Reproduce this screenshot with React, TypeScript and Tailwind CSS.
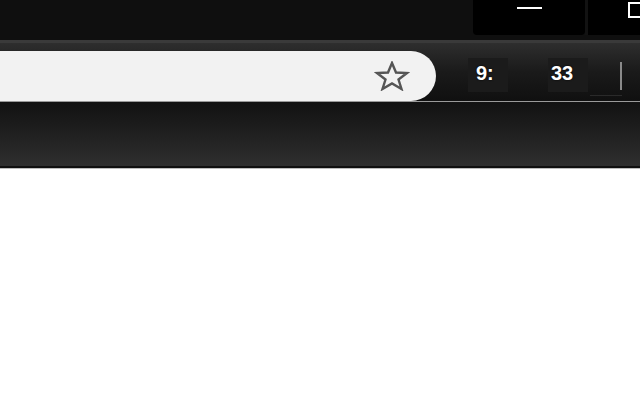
import React from "react";

export default function App() {
  return (
    <div className="w-[640px] h-[400px] bg-white overflow-hidden font-['Liberation_Sans',Arial,sans-serif]">
      {/* title bar */}
      <div className="h-[40px] bg-[#0f0f0f] flex">
        <div className="w-[473px]" />
        <div className="w-[112px] h-[35px] bg-black rounded-b-[4px] flex justify-center">
          <div className="mt-[7px] w-[25px] h-[2px] bg-white" />
        </div>
        <div className="w-[3px] h-[35px] bg-[#121212]" />
        <div className="flex-1 h-[35px] bg-black flex justify-end overflow-hidden">
          <div className="mt-[2px] w-[17px] h-[16px] border-2 border-white -mr-[5px] shrink-0" />
        </div>
      </div>
      {/* toolbar */}
      <div className="h-[61px] border-t-[3px] border-[#3a3a3a] bg-gradient-to-b from-[#2e2e2e] via-[#1a1a1a] to-[#101010] flex items-start">
        <div className="mt-[8px] w-[436px] h-[50px] bg-[#f2f2f2] rounded-r-full flex items-center justify-end pr-[26px]">
          <svg width="36" height="30" viewBox="0 0 36 30">
            <polygon
              points="18,2 22,11.5 33,12 24.5,18.5 27.5,28 18,22.5 8.5,28 11.5,18.5 3,12 14,11.5"
              fill="none"
              stroke="#555"
              strokeWidth="2.4"
              strokeLinejoin="miter"
            />
          </svg>
        </div>
        <div className="ml-[32px] mt-[15px] w-[40px] h-[34px] bg-[#1b1b1b] flex items-center pl-[8px] pb-[4px]">
          <span className="text-white font-bold text-[20px] leading-none [text-shadow:0_0_2px_#000]">9:</span>
        </div>
        <div className="ml-[40px] mt-[15px] w-[40px] h-[34px] bg-[#1b1b1b] flex items-center pl-[3px] pb-[4px]">
          <span className="text-white font-bold text-[20px] leading-none [text-shadow:0_0_2px_#000]">33</span>
        </div>
        <div className="ml-[2px] mt-[15px] w-[32px] h-[38px] border-b border-[#2a2a2a] flex justify-end">
          <div className="mt-[4px] w-[2px] h-[28px] bg-[#8a8a8a]" />
        </div>
      </div>
      {/* lower band */}
      <div className="h-[1px] bg-[#9a9a9a]" />
      <div className="h-[64px] bg-gradient-to-b from-[#121212] to-[#2f2f2f]" />
      <div className="h-[2px] bg-[#101010]" />
      <div className="h-[1px] bg-[#bdbdbd]" />
    </div>
  );
}
